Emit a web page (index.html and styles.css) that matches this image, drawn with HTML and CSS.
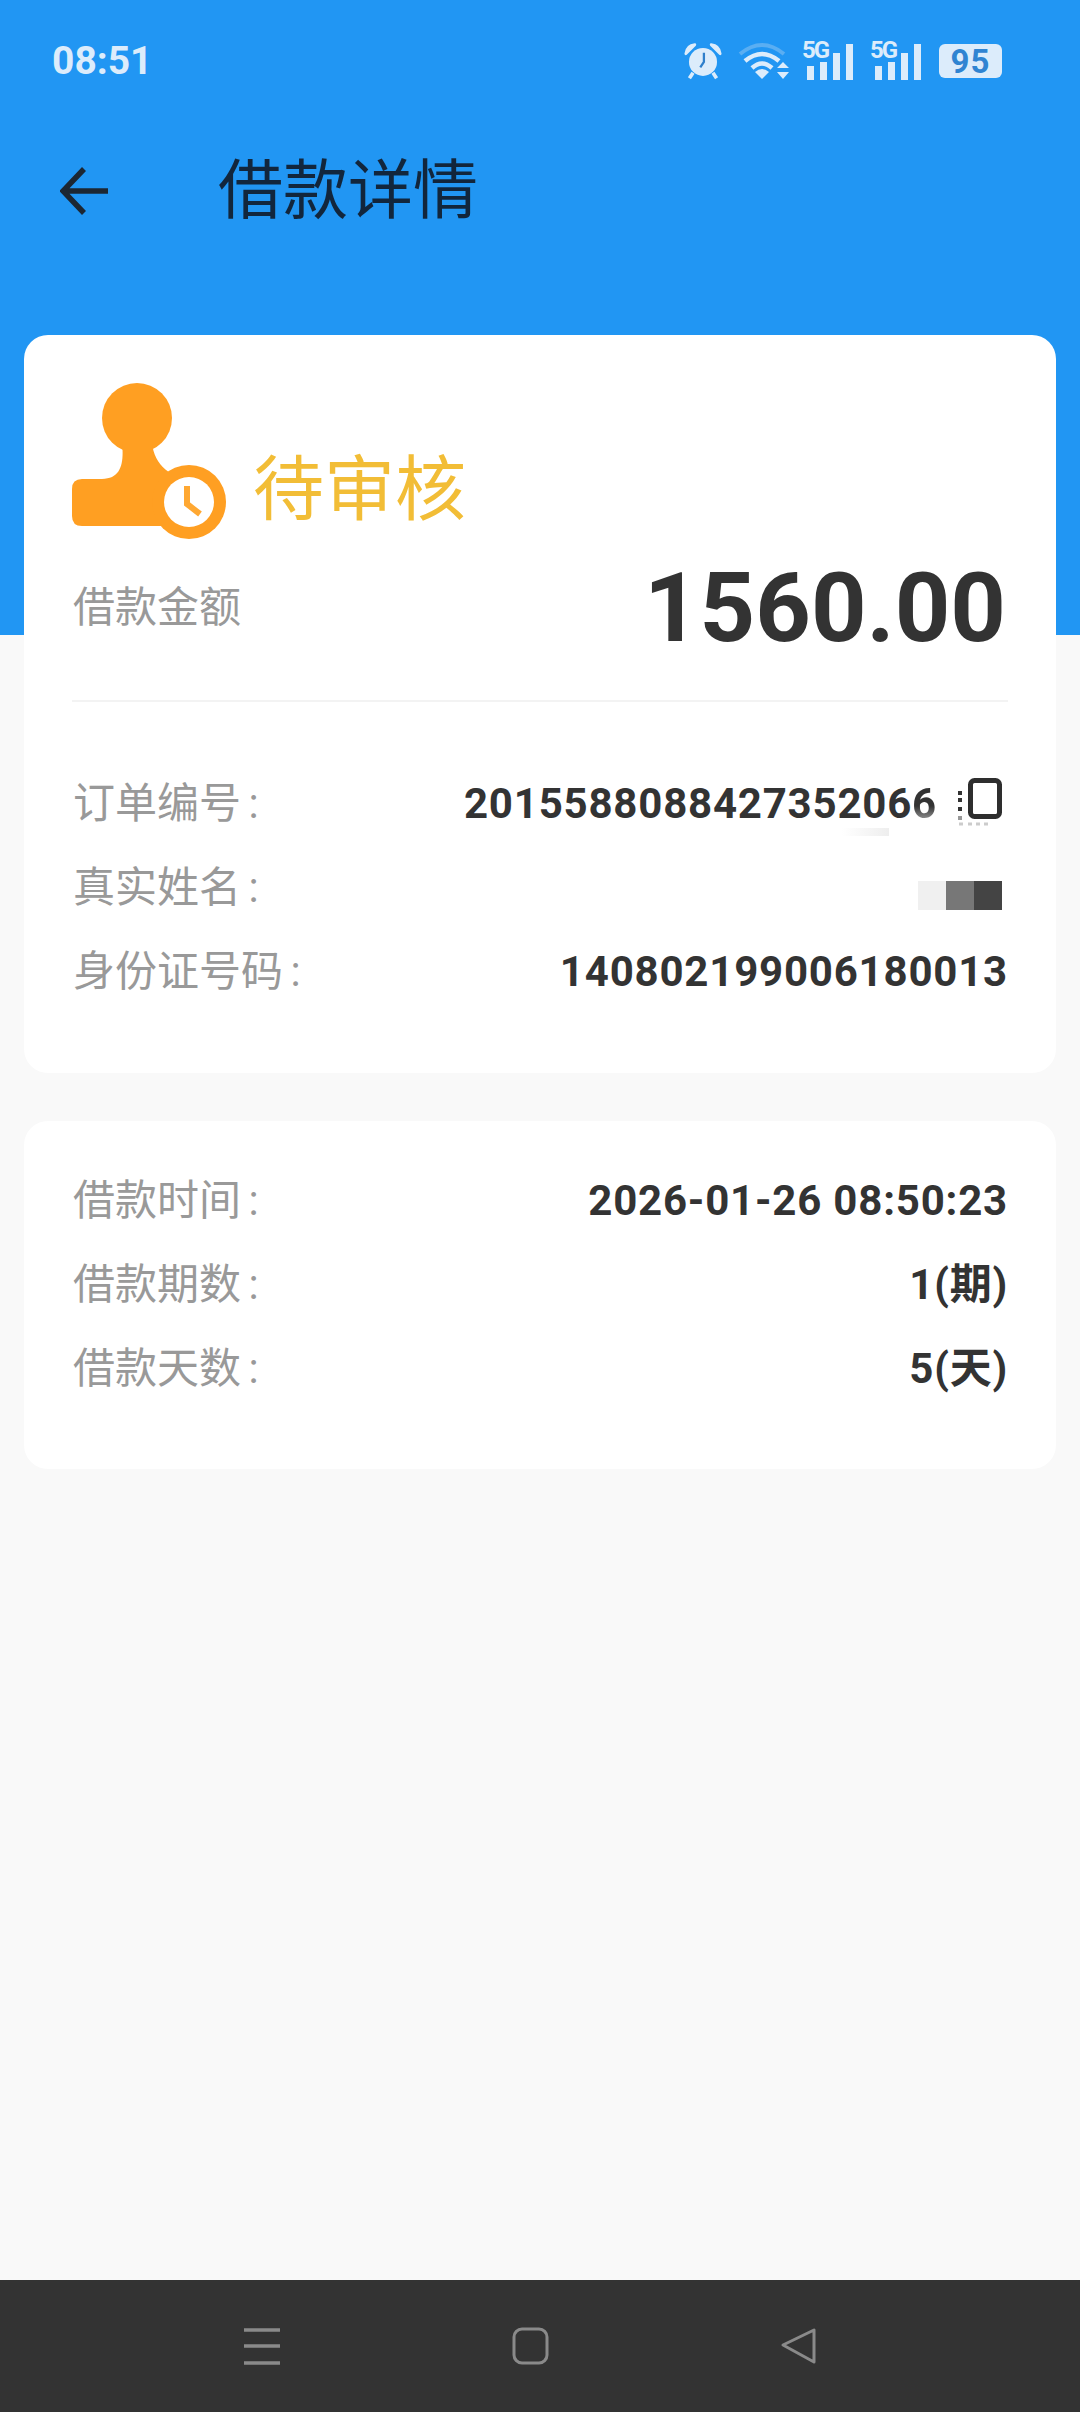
FILE: index.html
```html
<!DOCTYPE html>
<html lang="zh-CN">
<head>
  <meta charset="UTF-8">
  <meta name="viewport" content="width=device-width, initial-scale=1.0">
  <title>借款详情</title>
  <link rel="stylesheet" href="styles.css">
</head>
<body>
  <div class="page">

    <!-- Status bar -->
    <div class="statusbar">
      <span class="clock">08:51</span>
      <div class="status-icons">
        <svg class="ic-alarm" width="38" height="40" viewBox="0 0 42 40">
          <circle cx="21" cy="21" r="15.500" fill="#dcecfb"/>
          <path d="M2 12 Q3 3 12 2 Z M40 12 Q39 3 30 2 Z" fill="#dcecfb" stroke="#dcecfb" stroke-width="3" stroke-linejoin="round"/>
          <path d="M10 33 L6 39 M32 33 L36 39" stroke="#dcecfb" stroke-width="4"/>
          <path d="M22 11 V21 L18 27" stroke="#2f7fcb" stroke-width="2.500" fill="none"/>
        </svg>
        <svg class="ic-wifi" width="52" height="38" viewBox="0 0 52 38">
          <path d="M2 12 Q24 -6 46 12" stroke="#5aaef2" stroke-width="4" fill="none"/>
          <path d="M7 19 Q24 5 41 19" stroke="#dcecfb" stroke-width="4.500" fill="none"/>
          <path d="M14 26 Q24 17 34 26" stroke="#dcecfb" stroke-width="4.500" fill="none"/>
          <path d="M17 30 Q24 24 31 30 L24 37 Z" fill="#dcecfb"/>
          <path d="M39 26 L45 20 L51 26 Z M39 30 H51 L45 37 Z" fill="#dcecfb"/>
        </svg>
        <div class="signal">
          <span class="five-g">5G</span>
          <i class="bar b1"></i><i class="bar b2"></i><i class="bar b3"></i><i class="bar b4"></i>
        </div>
        <div class="signal">
          <span class="five-g">5G</span>
          <i class="bar b1"></i><i class="bar b2"></i><i class="bar b3"></i><i class="bar b4"></i>
        </div>
        <div class="battery"><span>95</span></div>
      </div>
    </div>

    <!-- Title bar -->
    <div class="titlebar">
      <svg class="back" width="50" height="48" viewBox="0 0 50 48">
        <path d="M48 24 H4 M24 2 L3 24 L24 46" stroke="#1c2733" stroke-width="5.500" fill="none"/>
      </svg>
      <h1>借款详情</h1>
    </div>

    <!-- Main card -->
    <div class="card card-main">
      <div class="state">
        <svg width="156" height="158" viewBox="0 0 156 158">
          <circle cx="65" cy="36" r="35" fill="#ff9f22"/>
          <path d="M50 60 C52 80 50 97 30 97 H10 Q0 97 0 107 V134 Q0 144 10 144 H110 L122 100 C100 95 82 85 80 60 Z" fill="#ff9f22"/>
          <circle cx="117" cy="120" r="37" fill="#ff9f22"/>
          <circle cx="117" cy="120" r="25" fill="#fff"/>
          <path d="M115 104 V122 L128 132" stroke="#ffa832" stroke-width="6" fill="none"/>
        </svg>
        <span class="state-text">待审核</span>
      </div>
      <div class="amount-row">
        <span class="label">借款金额</span>
        <span class="amount">1560.00</span>
      </div>
      <div class="divider"></div>
      <div class="rows">
        <div class="row">
          <span class="label">订单编号 :</span>
          <div class="order-val">
            <span class="value">201558808842735206<span class="fade-end">6</span></span>
            <i class="smudge"></i>
            <svg class="copy" width="46" height="54" viewBox="0 0 46 54">
              <rect x="14.500" y="2.500" width="29" height="36" rx="4" fill="#fff" stroke="#2e2e2e" stroke-width="5"/>
              <path d="M2 13 H6 V17 H2 Z M2 20 H6 V24 H2 Z M2 29 H6 V33 H2 Z" fill="#333"/>
              <path d="M2 38 H6 V42 H2 Z" fill="#999"/>
              <path d="M3 46 H7 M12 46 H16 M20 46 H24 M28 46 H32" stroke="#ccc" stroke-width="3"/>
            </svg>
          </div>
        </div>
        <div class="row">
          <span class="label">真实姓名 :</span>
          <div class="name-mask"><i class="m1"></i><i class="m2"></i><i class="m3"></i></div>
        </div>
        <div class="row">
          <span class="label">身份证号码 :</span>
          <span class="value">140802199006180013</span>
        </div>
      </div>
    </div>

    <!-- Loan info card -->
    <div class="card card-info">
      <div class="rows">
        <div class="row">
          <span class="label">借款时间 :</span>
          <span class="value">2026-01-26 08:50:23</span>
        </div>
        <div class="row">
          <span class="label">借款期数 :</span>
          <span class="value">1(期)</span>
        </div>
        <div class="row">
          <span class="label">借款天数 :</span>
          <span class="value">5(天)</span>
        </div>
      </div>
    </div>

    <!-- Navigation bar -->
    <div class="navbar">
      <svg width="38" height="38" viewBox="0 0 38 38">
        <path d="M1 3 H37 M1 19 H37 M1 36 H37" stroke="#8a8a8a" stroke-width="3.500"/>
      </svg>
      <svg width="38" height="38" viewBox="0 0 38 38">
        <rect x="2" y="2" width="33" height="34" rx="8" fill="none" stroke="#8a8a8a" stroke-width="3"/>
      </svg>
      <svg width="38" height="38" viewBox="0 0 38 38">
        <path d="M34 3 V35 L3 18 Z" fill="none" stroke="#8a8a8a" stroke-width="3" stroke-linejoin="round"/>
      </svg>
    </div>

  </div>
</body>
</html>
```

FILE: styles.css
```css
/* Global Styles */
body {
  margin: 0;
  padding: 0;
  font-family: Roboto, "Noto Sans CJK SC", sans-serif;
}

.page {
  width: 1080px;
  height: 2412px;
  display: flex;
  flex-direction: column;
  overflow: hidden;
  background: linear-gradient(#2196f3 635px, #f9f9f9 635px);
}

/* Status bar */
.statusbar {
  height: 122px;
  box-sizing: border-box;
  padding: 0 78px 0 52px;
  display: flex;
  justify-content: space-between;
  align-items: center;
}

.clock {
  font-size: 39px;
  font-weight: 700;
  color: #dcecfb;
}

.status-icons {
  display: flex;
  align-items: center;
  gap: 12px;
}

.ic-wifi {
  margin-left: 4px;
  margin-right: -5px;
}

.signal {
  position: relative;
  width: 54px;
  height: 38px;
  display: flex;
  align-items: flex-end;
  justify-content: flex-end;
  gap: 6px;
  margin-left: 2px;
}

.five-g {
  position: absolute;
  left: 3px;
  top: -4px;
  font-size: 24px;
  font-weight: 700;
  line-height: 24px;
  letter-spacing: -2px;
  color: #dcecfb;
}

.bar {
  display: block;
  width: 7px;
  background-color: #dcecfb;
}

.b1 { height: 14px; }
.b2 { height: 18px; }
.b3 { height: 27px; }
.b4 { height: 36px; }

.battery {
  width: 63px;
  height: 34px;
  margin-left: 6px;
  border-radius: 6px;
  background-color: #dcecfb;
  display: flex;
  justify-content: center;
  align-items: center;
  font-size: 33px;
  font-weight: 700;
  letter-spacing: 1px;
  color: #2f84d2;
}

/* Title bar */
.titlebar {
  height: 98px;
  padding: 38px 0 20px 60px;
  display: flex;
  align-items: flex-start;
}

.back {
  margin-top: 7px;
}

.titlebar h1 {
  margin: -14px 0 0 108px;
  font-size: 65px;
  line-height: 90px;
  font-weight: 400;
  color: #12263c;
}

/* Cards */
.card {
  margin: 0 24px;
  padding: 0 48px;
  background-color: #fff;
  border-radius: 24px;
}

.card-main {
  height: 738px;
  margin-top: 57px;
  box-sizing: border-box;
  padding-top: 47px;
}

.card-info {
  height: 348px;
  margin-top: 48px;
  box-sizing: border-box;
  padding-top: 50px;
}

.state {
  display: flex;
  align-items: flex-end;
  gap: 25px;
  height: 158px;
}

.state svg {
  flex: none;
}

.state-text {
  font-size: 71px;
  line-height: 100px;
  color: #f2bd36;
}

.amount-row {
  display: flex;
  justify-content: space-between;
  align-items: center;
  height: 112px;
  margin-top: 12px;
}

.amount {
  font-size: 97px;
  font-weight: 700;
  color: #333;
  margin-right: 2px;
}

.divider {
  height: 2px;
  margin-top: 36px;
  background-color: #f3f3f3;
}

.rows {
  display: flex;
  flex-direction: column;
  gap: 24px;
}

.card-main .rows {
  margin-top: 72px;
}

.row {
  height: 60px;
  display: flex;
  justify-content: space-between;
  align-items: center;
}

.label {
  font-size: 42px;
  line-height: 60px;
  word-spacing: -3px;
  margin-left: 1px;
  color: #999;
}

.value {
  font-size: 42px;
  line-height: 60px;
  font-weight: 700;
  letter-spacing: 0.8px;
  color: #333;
}

.order-val {
  position: relative;
  display: flex;
  align-items: center;
  gap: 19px;
  margin-right: 6px;
}

.fade-end {
  background: linear-gradient(#333 55%, #ccc);
  -webkit-background-clip: text;
  background-clip: text;
  color: transparent;
}

.smudge {
  position: absolute;
  left: 378px;
  bottom: -2px;
  width: 47px;
  height: 8px;
  background: linear-gradient(to right, #fff, #eee);
}

.copy {
  margin-top: 2px;
}

.name-mask {
  display: flex;
  margin-right: 6px;
  margin-top: 14px;
}

.name-mask i {
  display: block;
  width: 28px;
  height: 29px;
}

.m1 { background-color: #f0f0f0; }
.m2 { background-color: #777; }
.m3 { background-color: #444; }

/* Navigation bar */
.navbar {
  margin-top: auto;
  height: 132px;
  box-sizing: border-box;
  padding: 0 262px 0 243px;
  background-color: #333;
  display: flex;
  justify-content: space-between;
  align-items: center;
}
```
